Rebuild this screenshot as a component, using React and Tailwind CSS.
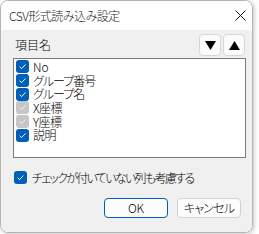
import React from "react";

const font = "font-['Noto_Sans_CJK_JP',sans-serif] [font-feature-settings:'palt'] font-light";

function Check({ disabled = false, size = 13 }) {
  return (
    <div
      className={`flex items-center justify-center rounded-[3px] shrink-0 ${disabled ? "bg-[#c6c6c6]" : "bg-[#005fb8]"}`}
      style={{ width: size, height: size }}
    >
      <svg width="9" height="9" viewBox="0 0 10 10">
        <path d="M1.8 5.2 L4 7.3 L8.3 2.8" fill="none" stroke={disabled ? "#f4f4f4" : "#ffffff"} strokeWidth="1.1" />
      </svg>
    </div>
  );
}

const items = [
  { label: "No", disabled: false, t: "tracking-[0px]" },
  { label: "グループ番号", disabled: false, t: "tracking-[-1px]" },
  { label: "グループ名", disabled: false, t: "tracking-[-1px]" },
  { label: "X座標", disabled: true, t: "tracking-[-0.5px]" },
  { label: "Y座標", disabled: true, t: "tracking-[-0.5px]" },
  { label: "説明", disabled: false, t: "tracking-[-0.5px]" },
];

export default function App() {
  return (
    <div className={`w-[259px] h-[234px] bg-white ${font} text-[12px] text-black overflow-hidden`}>
      <div className="w-[253px] h-[233px] flex flex-col rounded-[8px] border border-[#b4b4b4] overflow-hidden shadow-[1px_1px_4px_rgba(0,0,0,0.25)]">
        <div className="h-[29px] bg-white flex items-center justify-between pl-[8px] pr-[6px] shrink-0">
          <span className="text-[12px] leading-[14px] tracking-[-0.5px] text-[#1a1a1a]">CSV形式読み込み設定</span>
          <svg width="11" height="11" viewBox="0 0 11 11">
            <path d="M0.5 0.5 L10.5 10.5 M10.5 0.5 L0.5 10.5" stroke="#1a1a1a" strokeWidth="1" />
          </svg>
        </div>
        <div className="flex-1 bg-[#f0f0f0] pl-[12px] pr-[6px] pt-[4px] flex flex-col">
          <div className="h-[22px] flex items-center justify-between pr-[1px]">
            <span className="pl-[2px] leading-[14px]">項目名</span>
            <div className="flex gap-[2px]">
              <button className="w-[22px] h-[22px] rounded-[4px] border border-[#d6d6d6] bg-[#fbfbfb] flex items-center justify-center">
                <svg width="11" height="9" viewBox="0 0 11 9"><path d="M0 0 H11 L5.5 9 Z" fill="#000" /></svg>
              </button>
              <button className="w-[22px] h-[22px] rounded-[4px] border border-[#d6d6d6] bg-[#fbfbfb] flex items-center justify-center">
                <svg width="11" height="9" viewBox="0 0 11 9"><path d="M0 9 H11 L5.5 0 Z" fill="#000" /></svg>
              </button>
            </div>
          </div>
          <div className="mt-[2px] h-[100px] border border-[#7a7a7a] bg-white pt-[1px] pl-[2px] flex flex-col">
            {items.map((it) => (
              <div key={it.label} className="h-[13.7px] flex items-center gap-[4px]">
                <Check disabled={it.disabled} size={13} />
                <span className={`leading-[12px] ${it.t}`}>{it.label}</span>
              </div>
            ))}
          </div>
          <div className="mt-[13px] h-[13px] flex items-center gap-[5px] pl-[1px]">
            <Check size={13} />
            <span className="leading-[14px] tracking-[-1.7px]">チェックが付いていない列も考慮する</span>
          </div>
          <div className="mt-[14px] flex justify-end gap-[9px] pr-[5px]">
            <button className="w-[64px] h-[20px] rounded-[4px] border border-[#005fb8] bg-[#fdfdfd] leading-none text-[12px]">OK</button>
            <button className="w-[64px] h-[20px] rounded-[4px] border border-[#d0d0d0] bg-[#fdfdfd] leading-none text-[12px] tracking-[-0.8px]">キャンセル</button>
          </div>
        </div>
      </div>
    </div>
  );
}
